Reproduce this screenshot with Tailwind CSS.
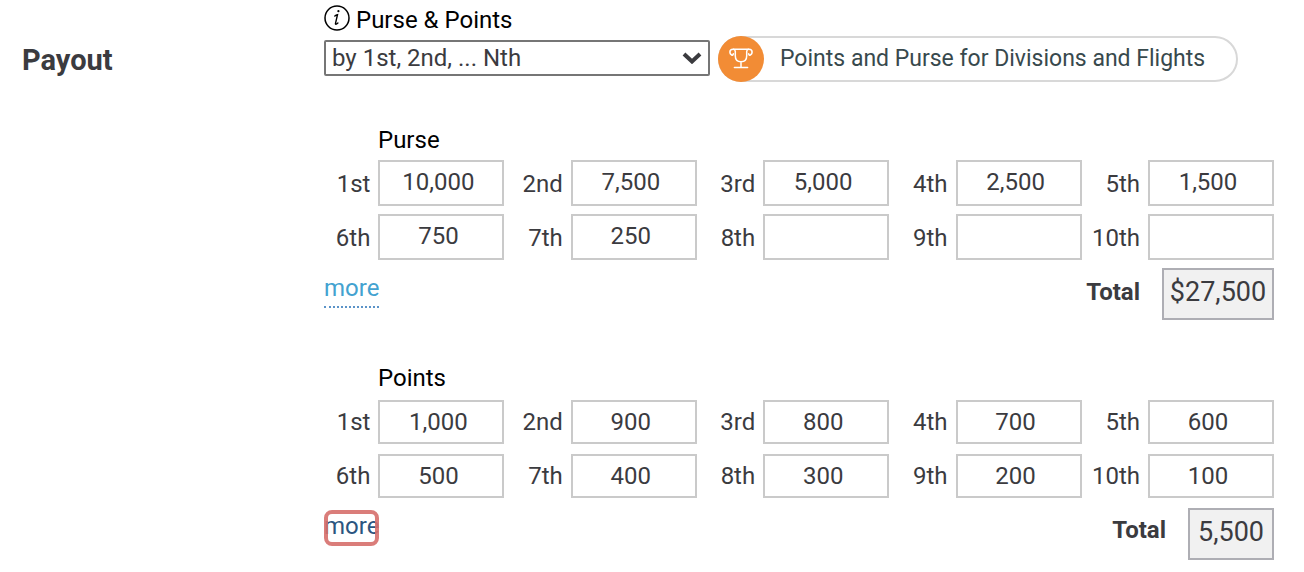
<!DOCTYPE html>
<html lang="en">
<head>
    <meta charset="UTF-8">
    <meta name="viewport" content="width=device-width, initial-scale=1.0">
    <title>Payout</title>
    <script src="https://cdn.jsdelivr.net/npm/@tailwindcss/browser@4"></script>
</head>
<body class="bg-white font-[Roboto,sans-serif] text-2xl text-[#3b3b3f]">
    <main class="flex pl-[22px] pr-[30px] pt-1">
        <h2 class="w-[302px] shrink-0 pt-10 text-[29px] leading-8 font-bold">Payout</h2>

        <div class="min-w-0 grow">
            <!-- Payout type -->
            <div class="flex h-8 items-center gap-1.5 text-black">
                <svg class="-mt-1 size-[26px] shrink-0" viewBox="0 0 26 26" fill="none" stroke="currentColor">
                    <circle cx="13" cy="13" r="12" stroke-width="1.5" />
                    <path d="M10.800 11c.9-.7 1.800-1.100 2.700-1.300l-2 8.600c-.3 1.400.6 1.500 2.400-.2" stroke-width="1.400" stroke-linecap="round" />
                    <circle cx="14.400" cy="6.200" r="1.100" fill="currentColor" stroke="none" />
                </svg>
                <label for="payout-type">Purse &amp; Points</label>
            </div>
            <div class="flex items-start gap-2">
                <div class="relative mt-1 w-[386px]">
                    <select id="payout-type" class="block h-9 w-full appearance-none rounded-xs border-2 border-[#767676] bg-white pr-10 pl-1.5 leading-8">
                        <option>by 1st, 2nd, ... Nth</option>
                    </select>
                    <svg class="pointer-events-none absolute top-3 right-2 h-3 w-5" viewBox="0 0 20 12" fill="none" stroke="currentColor" stroke-width="4">
                        <path d="M2 2l8 7.500L18 2" />
                    </svg>
                </div>
                <a href="#" class="flex h-[46px] w-[520px] items-center gap-4 rounded-full border-2 border-[#d8d8d8] text-[23px] text-[#38494d]">
                    <span class="-my-0.5 -ml-0.5 flex size-[46px] shrink-0 items-center justify-center rounded-full bg-[#f28c35] text-white">
                        <svg class="h-[22px] w-6" viewBox="0 0 24 22" fill="none" stroke="currentColor" stroke-width="1.500" stroke-linecap="round" stroke-linejoin="round">
                            <path d="M3.200 7.200C1.700 6.700.9 5.400.9 4 .9 2.200 2.200 1.200 4 1.200h16c1.800 0 3.100 1 3.100 2.800 0 1.400-.8 2.700-2.300 3.200" />
                            <path d="M3.200 7.200c.9-.2 1.200-.7 1.100-1.400M20.800 7.200c-.9-.2-1.200-.7-1.100-1.400" />
                            <path d="M4.600 1.200c1.200.4 1.700 1.200 1.700 2.400v4.200c0 3.800 2.400 6 5.700 6s5.700-2.200 5.700-6V3.600c0-1.200.5-2 1.700-2.400M12 13.800v5.600M5.400 19.400h13.200" />
                        </svg>
                    </span>
                    Points and Purse for Divisions and Flights
                </a>
            </div>

            <!-- Purse -->
            <section class="pt-[42px]">
                <h3 class="mb-1 pl-[54px] leading-8 text-black">Purse</h3>
                <div class="grid grid-cols-5 gap-x-3 gap-y-2">
                    <div class="flex items-center justify-end gap-2">
                        <label for="purse-1" class="pt-0.5">1st</label>
                        <input id="purse-1" type="text" value="10,000" class="h-[46px] w-[126px] border-2 border-[#cacaca] pr-1.5 pb-0.5 text-center">
                    </div>
                    <div class="flex items-center justify-end gap-2">
                        <label for="purse-2" class="pt-0.5">2nd</label>
                        <input id="purse-2" type="text" value="7,500" class="h-[46px] w-[126px] border-2 border-[#cacaca] pr-1.5 pb-0.5 text-center">
                    </div>
                    <div class="flex items-center justify-end gap-2">
                        <label for="purse-3" class="pt-0.5">3rd</label>
                        <input id="purse-3" type="text" value="5,000" class="h-[46px] w-[126px] border-2 border-[#cacaca] pr-1.5 pb-0.5 text-center">
                    </div>
                    <div class="flex items-center justify-end gap-2">
                        <label for="purse-4" class="pt-0.5">4th</label>
                        <input id="purse-4" type="text" value="2,500" class="h-[46px] w-[126px] border-2 border-[#cacaca] pr-1.5 pb-0.5 text-center">
                    </div>
                    <div class="flex items-center justify-end gap-2">
                        <label for="purse-5" class="pt-0.5">5th</label>
                        <input id="purse-5" type="text" value="1,500" class="h-[46px] w-[126px] border-2 border-[#cacaca] pr-1.5 pb-0.5 text-center">
                    </div>
                    <div class="flex items-center justify-end gap-2">
                        <label for="purse-6" class="pt-0.5">6th</label>
                        <input id="purse-6" type="text" value="750" class="h-[46px] w-[126px] border-2 border-[#cacaca] pr-1.5 pb-0.5 text-center">
                    </div>
                    <div class="flex items-center justify-end gap-2">
                        <label for="purse-7" class="pt-0.5">7th</label>
                        <input id="purse-7" type="text" value="250" class="h-[46px] w-[126px] border-2 border-[#cacaca] pr-1.5 pb-0.5 text-center">
                    </div>
                    <div class="flex items-center justify-end gap-2">
                        <label for="purse-8" class="pt-0.5">8th</label>
                        <input id="purse-8" type="text" value="" class="h-[46px] w-[126px] border-2 border-[#cacaca] pr-1.5 pb-0.5 text-center">
                    </div>
                    <div class="flex items-center justify-end gap-2">
                        <label for="purse-9" class="pt-0.5">9th</label>
                        <input id="purse-9" type="text" value="" class="h-[46px] w-[126px] border-2 border-[#cacaca] pr-1.5 pb-0.5 text-center">
                    </div>
                    <div class="flex items-center justify-end gap-2">
                        <label for="purse-10" class="pt-0.5">10th</label>
                        <input id="purse-10" type="text" value="" class="h-[46px] w-[126px] border-2 border-[#cacaca] pr-1.5 pb-0.5 text-center">
                    </div>
                </div>
                <div class="mt-2 flex items-start justify-between">
                    <a href="#" class="mt-1 border-b-2 border-dotted border-[#5b93c8] pb-0.5 leading-8 text-[#43a2d0]">more</a>
                    <div class="flex gap-[22px]">
                        <label for="purse-total" class="pt-2 leading-8 font-bold">Total</label>
                        <output id="purse-total" class="h-[52px] w-28 border-2 border-[#aeaeb4] bg-[#f1f1f1] pt-1 text-center text-[27px] leading-9">$27,500</output>
                    </div>
                </div>
            </section>

            <!-- Points -->
            <section class="pt-[42px]">
                <h3 class="mb-1.5 pl-[54px] leading-8 text-black">Points</h3>
                <div class="grid grid-cols-5 gap-x-3 gap-y-2.5">
                    <div class="flex items-center justify-end gap-2">
                        <label for="points-1">1st</label>
                        <input id="points-1" type="text" value="1,000" class="h-11 w-[126px] border-2 border-[#cacaca] pr-1.5 text-center">
                    </div>
                    <div class="flex items-center justify-end gap-2">
                        <label for="points-2">2nd</label>
                        <input id="points-2" type="text" value="900" class="h-11 w-[126px] border-2 border-[#cacaca] pr-1.5 text-center">
                    </div>
                    <div class="flex items-center justify-end gap-2">
                        <label for="points-3">3rd</label>
                        <input id="points-3" type="text" value="800" class="h-11 w-[126px] border-2 border-[#cacaca] pr-1.5 text-center">
                    </div>
                    <div class="flex items-center justify-end gap-2">
                        <label for="points-4">4th</label>
                        <input id="points-4" type="text" value="700" class="h-11 w-[126px] border-2 border-[#cacaca] pr-1.5 text-center">
                    </div>
                    <div class="flex items-center justify-end gap-2">
                        <label for="points-5">5th</label>
                        <input id="points-5" type="text" value="600" class="h-11 w-[126px] border-2 border-[#cacaca] pr-1.5 text-center">
                    </div>
                    <div class="flex items-center justify-end gap-2">
                        <label for="points-6">6th</label>
                        <input id="points-6" type="text" value="500" class="h-11 w-[126px] border-2 border-[#cacaca] pr-1.5 text-center">
                    </div>
                    <div class="flex items-center justify-end gap-2">
                        <label for="points-7">7th</label>
                        <input id="points-7" type="text" value="400" class="h-11 w-[126px] border-2 border-[#cacaca] pr-1.5 text-center">
                    </div>
                    <div class="flex items-center justify-end gap-2">
                        <label for="points-8">8th</label>
                        <input id="points-8" type="text" value="300" class="h-11 w-[126px] border-2 border-[#cacaca] pr-1.5 text-center">
                    </div>
                    <div class="flex items-center justify-end gap-2">
                        <label for="points-9">9th</label>
                        <input id="points-9" type="text" value="200" class="h-11 w-[126px] border-2 border-[#cacaca] pr-1.5 text-center">
                    </div>
                    <div class="flex items-center justify-end gap-2">
                        <label for="points-10">10th</label>
                        <input id="points-10" type="text" value="100" class="h-11 w-[126px] border-2 border-[#cacaca] pr-1.5 text-center">
                    </div>
                </div>
                <div class="mt-2.5 flex items-start justify-between">
                    <!-- focused link, the ring is drawn inside its box -->
                    <a href="#" class="relative mt-0.5 h-9 leading-8 text-[#2b5580]">more<span class="absolute inset-0 rounded-lg border-4 border-[#d66f6c]/90"></span></a>
                    <div class="flex gap-[22px]">
                        <label for="points-total" class="pt-1.5 leading-8 font-bold">Total</label>
                        <output id="points-total" class="h-[52px] w-[86px] border-2 border-[#aeaeb4] bg-[#f1f1f1] pt-1 text-center text-[27px] leading-9">5,500</output>
                    </div>
                </div>
            </section>
        </div>
    </main>
</body>
</html>
